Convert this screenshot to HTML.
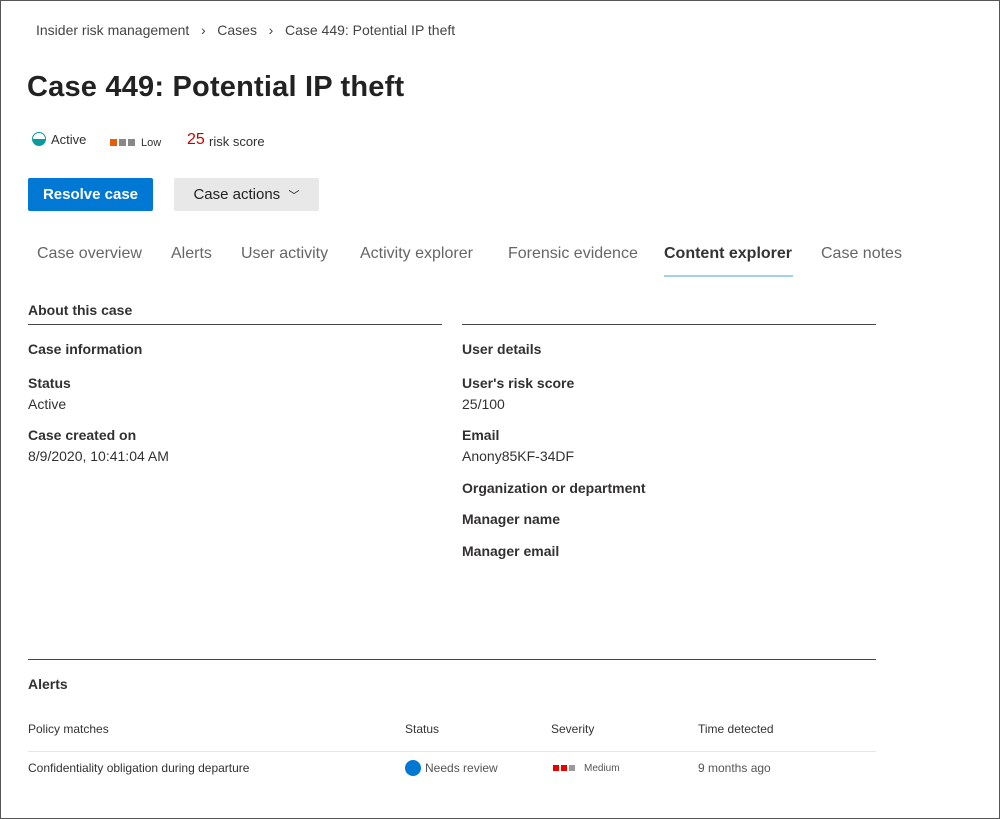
<!DOCTYPE html><html><head><style>
body{margin:0;width:1000px;height:819px;overflow:hidden;font-family:"Liberation Sans",sans-serif;color:#323130;background:#fff}
.frame{position:absolute;left:0;top:0;width:998px;height:817px;border:1px solid #555}
.a{position:absolute;white-space:nowrap}
.b{font-weight:bold}
.line{position:absolute;height:1px;background:#444}
</style></head><body><div class="frame"></div>
<div class="a" style="left:36px;top:22px;font-size:14px;color:#444">Insider risk management &nbsp;&nbsp;›&nbsp;&nbsp; Cases &nbsp;&nbsp;›&nbsp;&nbsp; Case 449: Potential IP theft</div>
<div class="a b" style="left:27px;top:71px;font-size:29px;color:#222;letter-spacing:0.2px">Case 449: Potential IP theft</div>
<div class="a" style="left:32px;top:132px;width:14px;height:14px;border-radius:50%;border:1px solid #0a9c9c;background:linear-gradient(#fff 50%,#0a9c9c 50%);box-sizing:border-box"></div>
<div class="a" style="left:51px;top:132px;font-size:13px">Active</div>
<div class="a" style="left:110px;top:139px;width:7px;height:7px;background:#e85d0c"></div>
<div class="a" style="left:119px;top:139px;width:7px;height:7px;background:#888"></div>
<div class="a" style="left:128px;top:139px;width:7px;height:7px;background:#888"></div>
<div class="a" style="left:141px;top:137px;font-size:11px">Low</div>
<div class="a" style="left:187px;top:131px;font-size:16px;color:#c00">25</div>
<div class="a" style="left:209px;top:134px;font-size:13px">risk score</div>
<div class="a b" style="left:28px;top:178px;width:125px;height:33px;background:#0078d4;color:#fff;font-size:15px;line-height:33px;text-align:center;border-radius:2px">Resolve case</div>
<div class="a" style="left:174px;top:178px;width:145px;height:33px;background:#e8e8e8;color:#222;font-size:15px;line-height:33px;text-align:center;border-radius:2px">Case actions &nbsp;<span style="font-size:11px">﹀</span></div>
<div class="a" style="top:245px;left:37px;font-size:16px;color:#666">Case overview</div>
<div class="a" style="top:245px;left:171px;font-size:16px;color:#666">Alerts</div>
<div class="a" style="top:245px;left:241px;font-size:16px;color:#666">User activity</div>
<div class="a" style="top:245px;left:360px;font-size:16px;color:#666">Activity explorer</div>
<div class="a" style="top:245px;left:508px;font-size:16px;color:#666">Forensic evidence</div>
<div class="a b" style="top:245px;left:664px;font-size:16px;color:#333">Content explorer</div>
<div class="a" style="top:275px;left:664px;width:129px;height:2px;background:#a6cfe8"></div>
<div class="a" style="top:245px;left:821px;font-size:16px;color:#666">Case notes</div>
<div class="a b" style="left:28px;top:302px;font-size:14px">About this case</div>
<div class="line" style="left:28px;top:324px;width:414px"></div>
<div class="line" style="left:462px;top:324px;width:414px"></div>
<div class="a b" style="left:28px;top:341px;font-size:14px">Case information</div>
<div class="a b" style="left:28px;top:375px;font-size:14px">Status</div>
<div class="a" style="left:28px;top:396px;font-size:14px">Active</div>
<div class="a b" style="left:28px;top:427px;font-size:14px">Case created on</div>
<div class="a" style="left:28px;top:448px;font-size:14px">8/9/2020, 10:41:04 AM</div>
<div class="a b" style="left:462px;top:341px;font-size:14px">User details</div>
<div class="a b" style="left:462px;top:375px;font-size:14px">User's risk score</div>
<div class="a" style="left:462px;top:396px;font-size:14px">25/100</div>
<div class="a b" style="left:462px;top:427px;font-size:14px">Email</div>
<div class="a" style="left:462px;top:448px;font-size:14px">Anony85KF-34DF</div>
<div class="a b" style="left:462px;top:480px;font-size:14px">Organization or department</div>
<div class="a b" style="left:462px;top:511px;font-size:14px">Manager name</div>
<div class="a b" style="left:462px;top:543px;font-size:14px">Manager email</div>
<div class="line" style="left:28px;top:659px;width:848px"></div>
<div class="a b" style="left:28px;top:676px;font-size:14px">Alerts</div>
<div class="a" style="left:28px;top:722px;font-size:12px;color:#333">Policy matches</div>
<div class="a" style="left:405px;top:722px;font-size:12px;color:#333">Status</div>
<div class="a" style="left:551px;top:722px;font-size:12px;color:#333">Severity</div>
<div class="a" style="left:698px;top:722px;font-size:12px;color:#333">Time detected</div>
<div class="a" style="left:28px;top:751px;width:848px;height:1px;background:#e5e5e5"></div>
<div class="a" style="left:28px;top:761px;font-size:12px">Confidentiality obligation during departure</div>
<div class="a" style="left:405px;top:760px;width:16px;height:16px;border-radius:50%;background:#0078d4"></div>
<div class="a" style="left:425px;top:761px;font-size:12px;color:#555">Needs review</div>
<div class="a" style="left:553px;top:765px;width:6px;height:6px;background:#e00"></div>
<div class="a" style="left:561px;top:765px;width:6px;height:6px;background:#e00"></div>
<div class="a" style="left:569px;top:765px;width:6px;height:6px;background:#999"></div>
<div class="a" style="left:584px;top:763px;font-size:10px;color:#555">Medium</div>
<div class="a" style="left:698px;top:761px;font-size:12px;color:#555">9 months ago</div>
</body></html>
